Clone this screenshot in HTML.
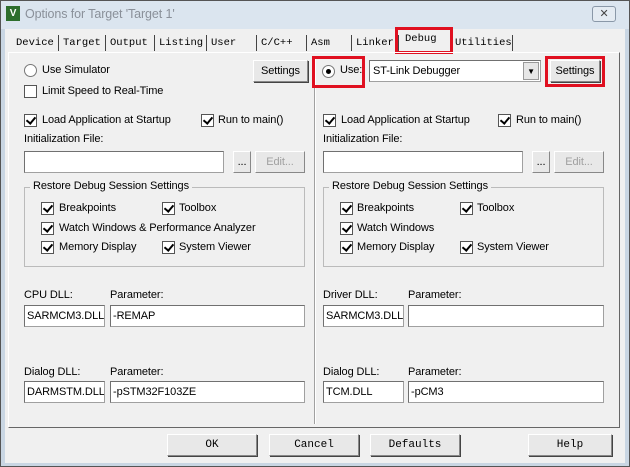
<html><head><style>
*{margin:0;padding:0;box-sizing:border-box}
body{width:630px;height:467px;overflow:hidden;background:#f0f0f0;font-family:"Liberation Sans",sans-serif;font-size:11px;letter-spacing:-0.1px;color:#000;position:relative}
.a{position:absolute;white-space:nowrap}
.win{position:absolute;left:0;top:0;width:630px;height:467px;border:1px solid #555;background:#c9d6e3}
.cb{position:absolute;width:13px;height:13px;border:1px solid #555;background:#fff}
.cb.k::after{content:"";position:absolute;left:3px;top:0px;width:4px;height:7px;border:solid #000;border-width:0 2px 2px 0;transform:rotate(40deg)}
.rb{position:absolute;width:13px;height:13px;border:1px solid #777;border-radius:50%;background:#fff}
.rb.k::after{content:"";position:absolute;left:3px;top:3px;width:5px;height:5px;border-radius:50%;background:#000}
.ed{position:absolute;background:#fff;border:1px solid #a0a0a0;border-top-color:#707070;border-left-color:#707070;height:22px;padding:4px 2px;font-size:11px;overflow:hidden}
.bt{position:absolute;background:#e8e8e8;border:1px solid #888;border-top-color:#fff;border-left-color:#fff;box-shadow:1px 1px 0 #444;text-align:center;line-height:20px}
.gb{position:absolute;border:1px solid #bbb}
.tab{position:absolute;top:35px;font-family:"Liberation Mono",monospace;font-size:10.5px;letter-spacing:0;border-right:1px solid #444;height:16px;line-height:16px;padding-left:4px;overflow:hidden;white-space:nowrap}
.red{position:absolute;border:3px solid #e01020}
.mono{font-family:"Liberation Mono",monospace;letter-spacing:0}
</style></head><body>
<div class="win"></div>
<div class="a" style="left:1px;top:1px;width:628px;height:28px;background:#dbe5ef"></div>
<div class="a" style="left:6px;top:6px;width:14px;height:15px;background:#2d6e2d;color:#fff;font-size:10px;font-weight:bold;text-align:center;line-height:15px">V</div>
<div class="a" style="left:25px;top:7px;font-size:12.5px;color:#8a9099">Options for Target 'Target 1'</div>
<div class="a" style="left:592px;top:6px;width:24px;height:16px;border:1px solid #8a98a8;border-radius:3px;background:#e4ebf2;text-align:center;font-size:11px;line-height:14px;color:#444">✕</div>
<div class="a" style="left:5px;top:29px;width:620px;height:434px;background:#f0f0f0"></div>
<div class="tab" style="left:12px;width:47px">Device</div>
<div class="tab" style="left:59px;width:47px">Target</div>
<div class="tab" style="left:106px;width:49px">Output</div>
<div class="tab" style="left:155px;width:52px">Listing</div>
<div class="tab" style="left:207px;width:50px">User</div>
<div class="tab" style="left:257px;width:50px">C/C++</div>
<div class="tab" style="left:307px;width:45px">Asm</div>
<div class="tab" style="left:352px;width:47px">Linker</div>
<div class="tab" style="left:401px;top:31px;width:50px;border:none;background:#f0f0f0">Debug</div>
<div class="tab" style="left:451px;width:62px">Utilities</div>
<div class="red" style="left:395px;top:27px;width:58px;height:27px"></div>
<div class="a" style="left:8px;top:52px;width:612px;height:376px;border:1px solid #999;border-top-color:#fff;border-left-color:#fff;border-right-color:#666;border-bottom-color:#666"></div>
<div class="a" style="left:314px;top:56px;width:2px;height:368px;border-left:1px solid #a0a0a0;border-right:1px solid #fff"></div>
<div class="rb" style="left:24px;top:64px"></div><div class="a" style="left:42px;top:64px">Use Simulator</div>
<div class="cb" style="left:24px;top:85px"></div><div class="a" style="left:42px;top:85px">Limit Speed to Real-Time</div>
<div class="bt" style="left:253px;top:60px;width:55px;height:22px">Settings</div>
<div class="cb k" style="left:24px;top:114px"></div><div class="a" style="left:42px;top:114px">Load Application at Startup</div>
<div class="cb k" style="left:201px;top:114px"></div><div class="a" style="left:218px;top:114px">Run to main()</div>
<div class="a" style="left:24px;top:133px">Initialization File:</div>
<div class="ed" style="left:24px;top:151px;width:200px"></div>
<div class="bt" style="left:233px;top:151px;width:18px;height:22px;box-shadow:none">...</div>
<div class="bt" style="left:255px;top:151px;width:50px;height:22px;color:#a0a0a0;box-shadow:none">Edit...</div>
<div class="gb" style="left:24px;top:187px;width:281px;height:80px"></div>
<div class="a" style="left:30px;top:180px;background:#f0f0f0;padding:0 3px">Restore Debug Session Settings</div>
<div class="cb k" style="left:41px;top:202px"></div><div class="a" style="left:59px;top:202px">Breakpoints</div>
<div class="cb k" style="left:162px;top:202px"></div><div class="a" style="left:179px;top:202px">Toolbox</div>
<div class="cb k" style="left:41px;top:222px"></div><div class="a" style="left:59px;top:222px">Watch Windows &amp; Performance Analyzer</div>
<div class="cb k" style="left:41px;top:241px"></div><div class="a" style="left:59px;top:241px">Memory Display</div>
<div class="cb k" style="left:162px;top:241px"></div><div class="a" style="left:179px;top:241px">System Viewer</div>
<div class="a" style="left:24px;top:289px">CPU DLL:</div><div class="a" style="left:110px;top:289px">Parameter:</div>
<div class="ed" style="left:24px;top:305px;width:81px">SARMCM3.DLL</div>
<div class="ed" style="left:110px;top:305px;width:195px">-REMAP</div>
<div class="a" style="left:24px;top:366px">Dialog DLL:</div><div class="a" style="left:110px;top:366px">Parameter:</div>
<div class="ed" style="left:24px;top:381px;width:81px">DARMSTM.DLL</div>
<div class="ed" style="left:110px;top:381px;width:195px">-pSTM32F103ZE</div>
<div class="rb k" style="left:322px;top:65px"></div><div class="a" style="left:340px;top:64px">Use:</div>
<div class="red" style="left:312px;top:56px;width:53px;height:32px"></div>
<div class="ed" style="left:369px;top:60px;width:172px;padding-left:3px">ST-Link Debugger</div>
<div class="a" style="left:523px;top:62px;width:16px;height:18px;background:#e6e6e6;border:1px solid #999;font-size:8px;text-align:center;line-height:17px">▼</div>
<div class="bt" style="left:550px;top:60px;width:50px;height:22px">Settings</div>
<div class="red" style="left:545px;top:56px;width:60px;height:31px"></div>
<div class="cb k" style="left:323px;top:114px"></div><div class="a" style="left:341px;top:114px">Load Application at Startup</div>
<div class="cb k" style="left:498px;top:114px"></div><div class="a" style="left:516px;top:114px">Run to main()</div>
<div class="a" style="left:323px;top:133px">Initialization File:</div>
<div class="ed" style="left:323px;top:151px;width:200px"></div>
<div class="bt" style="left:532px;top:151px;width:18px;height:22px;box-shadow:none">...</div>
<div class="bt" style="left:554px;top:151px;width:50px;height:22px;color:#a0a0a0;box-shadow:none">Edit...</div>
<div class="gb" style="left:323px;top:187px;width:281px;height:80px"></div>
<div class="a" style="left:329px;top:180px;background:#f0f0f0;padding:0 3px">Restore Debug Session Settings</div>
<div class="cb k" style="left:340px;top:202px"></div><div class="a" style="left:357px;top:202px">Breakpoints</div>
<div class="cb k" style="left:460px;top:202px"></div><div class="a" style="left:477px;top:202px">Toolbox</div>
<div class="cb k" style="left:340px;top:222px"></div><div class="a" style="left:357px;top:222px">Watch Windows</div>
<div class="cb k" style="left:340px;top:241px"></div><div class="a" style="left:357px;top:241px">Memory Display</div>
<div class="cb k" style="left:460px;top:241px"></div><div class="a" style="left:477px;top:241px">System Viewer</div>
<div class="a" style="left:323px;top:289px">Driver DLL:</div><div class="a" style="left:408px;top:289px">Parameter:</div>
<div class="ed" style="left:323px;top:305px;width:81px">SARMCM3.DLL</div>
<div class="ed" style="left:408px;top:305px;width:196px"></div>
<div class="a" style="left:323px;top:366px">Dialog DLL:</div><div class="a" style="left:408px;top:366px">Parameter:</div>
<div class="ed" style="left:323px;top:381px;width:81px">TCM.DLL</div>
<div class="ed" style="left:408px;top:381px;width:196px">-pCM3</div>
<div class="bt mono" style="left:167px;top:434px;width:90px;height:22px">OK</div>
<div class="bt mono" style="left:269px;top:434px;width:90px;height:22px">Cancel</div>
<div class="bt mono" style="left:370px;top:434px;width:90px;height:22px">Defaults</div>
<div class="bt mono" style="left:528px;top:434px;width:84px;height:22px">Help</div>
</body></html>
